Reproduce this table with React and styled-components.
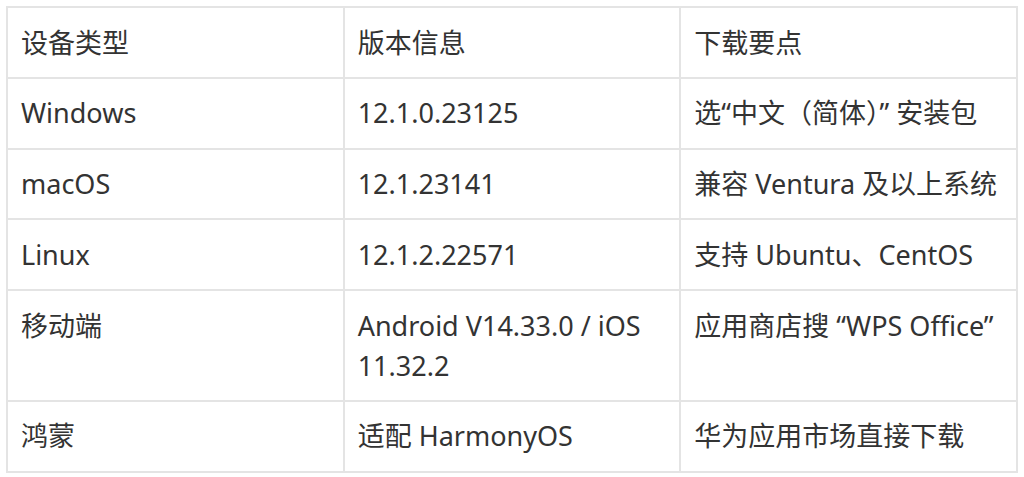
import styled, { createGlobalStyle } from 'styled-components'

const rows = [
  ['Windows', '12.1.0.23125', '选“中文（简体）” 安装包'],
  ['macOS', '12.1.23141', '兼容 Ventura 及以上系统'],
  ['Linux', '12.1.2.22571', '支持 Ubuntu、CentOS'],
  ['移动端', 'Android V14.33.0 / iOS 11.32.2', '应用商店搜 “WPS Office”'],
  ['鸿蒙', '适配 HarmonyOS', '华为应用市场直接下载'],
]

const GlobalStyle = createGlobalStyle`
  body {
    margin: 0;
    background: #fff;
    font-family: "Noto Sans", "Noto Sans CJK SC", sans-serif;
    color: #333;
  }
`

const Wrap = styled.div`
  padding: 6px;
`

const Table = styled.table`
  width: 1012px;
  table-layout: fixed;
  border-collapse: collapse;
  border: 2px solid #e4e4e4;
`

const Cell = styled.td`
  border: 2px solid #e4e4e4;
  padding: 14.5px 12px 14.3px 13px;
  font-size: 27px;
  line-height: 40px;
  vertical-align: top;
  text-align: left;
  font-weight: 400;
`

export default function App() {
  return (
    <Wrap>
      <GlobalStyle />
      <Table>
        <thead>
          <tr>
            <Cell as="th">设备类型</Cell>
            <Cell as="th">版本信息</Cell>
            <Cell as="th">下载要点</Cell>
          </tr>
        </thead>
        <tbody>
          {rows.map(row => (
            <tr key={row[0]}>
              {row.map(text => <Cell key={text}>{text}</Cell>)}
            </tr>
          ))}
        </tbody>
      </Table>
    </Wrap>
  )
}
